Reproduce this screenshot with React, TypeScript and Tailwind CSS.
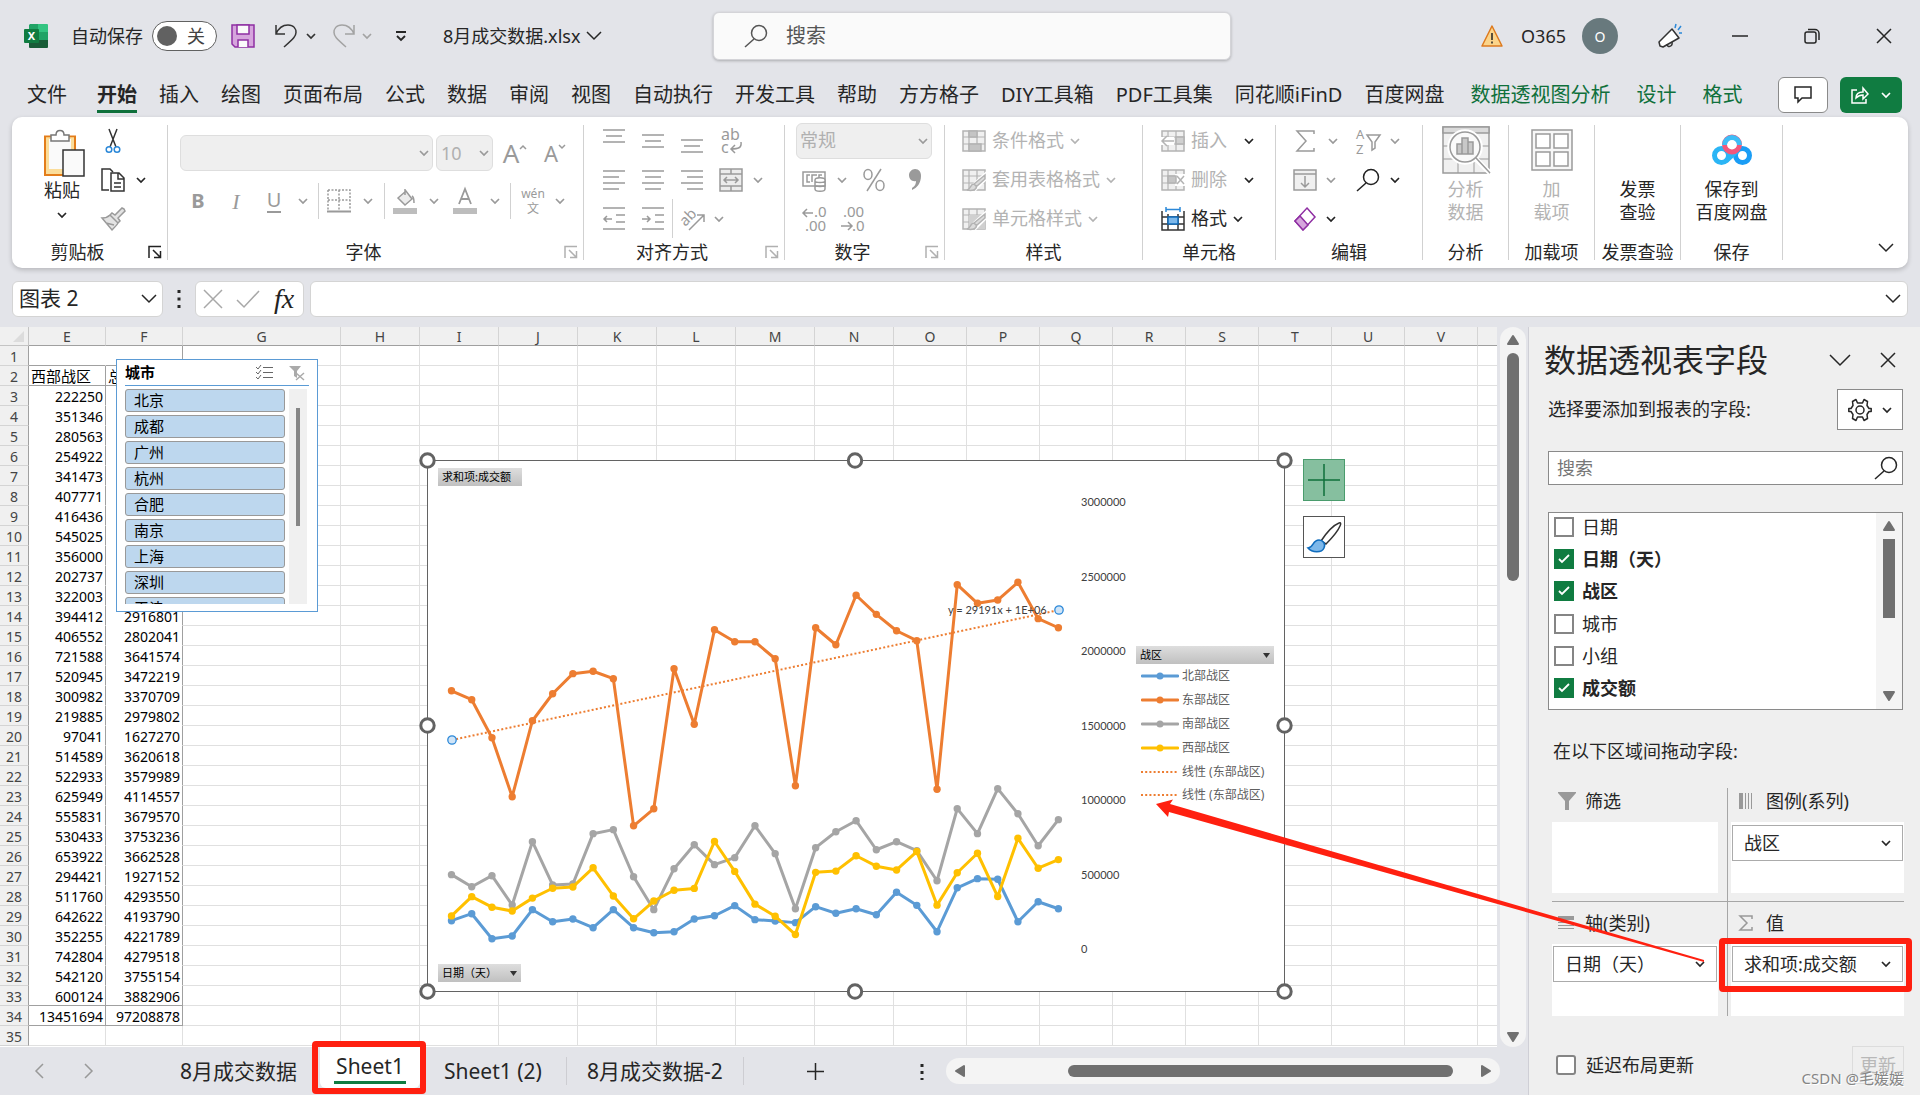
import type { ReactNode } from "react";

const columns = "EFGHIJKLMNOPQRSTUV".split("");

const west = [
  222250, 351346, 280563, 254922, 341473, 407771, 416436, 545025, 356000, 202737, 322003, 394412,
  406552, 721588, 520945, 300982, 219885, 97041, 514589, 522933, 625949, 555831, 530433, 653922,
  294421, 511760, 642622, 352255, 742804, 542120, 600124,
];

// the first totals are hidden behind the slicer
const totals = [
  2916801, 2802041, 3641574, 3472219, 3370709, 2979802, 1627270, 3620618, 3579989, 4114557, 3679570,
  3753236, 3662528, 1927152, 4293550, 4193790, 4221789, 4279518, 3755154, 3882906, 97208878,
];

// values in thousands
const north = [
  190, 237, 69, 87, 264, 183, 201, 143, 264, 143, 109, 116, 201, 223, 291, 197, 188, 177, 284, 240,
  270, 230, 381, 293, 116, 411, 472, 468, 183, 317, 270,
];
const east = [
  1733, 1673, 1418, 1022, 1532, 1713, 1848, 1864, 1814, 827, 941, 1881, 1508, 2143, 2062, 2062, 1948,
  1096, 2156, 2042, 2374, 2246, 2136, 2069, 1072, 2445, 2320, 2342, 2461, 2217, 2156,
];
const south = [
  499, 418, 492, 295, 720, 430, 436, 774, 801, 485, 264, 539, 700, 566, 613, 827, 640, 270, 680, 787,
  861, 666, 720, 660, 458, 942, 774, 1076, 908, 693, 868,
];

const series = [
  { name: "北部战区", color: "#5b9bd5", data: north },
  { name: "东部战区", color: "#ed7d31", data: east },
  { name: "南部战区", color: "#a5a5a5", data: south },
  { name: "西部战区", color: "#ffc000", data: west.map((v) => v / 1000) },
];

const Icon = ({
  w = 24,
  h = 24,
  className = "",
  children,
}: {
  w?: number;
  h?: number;
  className?: string;
  children: ReactNode;
}) => (
  <svg
    width={w}
    height={h}
    viewBox={`0 0 ${w} ${h}`}
    fill="none"
    stroke="currentColor"
    strokeWidth={1.5}
    className={`shrink-0 overflow-visible ${className}`}
    aria-hidden="true"
  >
    {children}
  </svg>
);

const Chevron = ({ className = "" }: { className?: string }) => (
  <Icon w={10} h={8} className={className}>
    <path d="M1 2l4 4 4-4" strokeWidth={1.7} />
  </Icon>
);

const BigChevron = ({ className = "" }: { className?: string }) => (
  <Icon w={16} h={12} className={className}>
    <path d="M1 2l7 7 7-7" />
  </Icon>
);

const SearchIcon = ({ className = "" }: { className?: string }) => (
  <Icon w={24} h={24} className={className}>
    <circle cx="15" cy="9" r="7.5" />
    <path d="M10 15L1 23" />
  </Icon>
);

const Tool = ({ label, className = "", children }: { label: string; className?: string; children: ReactNode }) => (
  <button aria-label={label} className={`flex h-full shrink-0 items-center justify-center ${className}`}>
    {children}
  </button>
);

const Drop = ({ className = "w-5" }: { className?: string }) => (
  <button aria-label="更多" className={`flex h-full shrink-0 items-center justify-center ${className}`}>
    <Chevron />
  </button>
);

const Divider = () => <div className="my-2 w-px shrink-0 bg-[#d1d1d1]" />;

const SmallDivider = () => (
  <div className="flex h-full w-2 shrink-0 justify-center">
    <div className="w-px bg-[#d1d1d1]" />
  </div>
);

const Launcher = ({ className }: { className: string }) => (
  <button aria-label="对话框启动器" className={`flex h-7 w-6 items-center justify-center ${className}`}>
    <Icon w={14} h={14}>
      <path d="M1 13V1.500H13M5 5l7 7M12.500 6v6.500H6" />
    </Icon>
  </button>
);

const Group = ({
  label,
  width,
  launcher,
  children,
}: {
  label: string;
  width: string;
  launcher?: string;
  children: ReactNode;
}) => (
  <>
    <section className={`flex shrink-0 flex-col pt-1 ${width}`}>
      <div className="h-[117px]">{children}</div>
      <div className="flex h-7 items-center">
        <span className="flex-1 whitespace-nowrap text-center text-[18px]">{label}</span>
        {launcher && <Launcher className={launcher} />}
      </div>
    </section>
    <Divider />
  </>
);

const BigTool = ({ lines, className = "", children }: { lines: string[]; className?: string; children?: ReactNode }) => (
  <button className={`flex w-full flex-col items-center text-[18px]/[23px] ${className}`}>
    <span className="flex h-[57px] items-center">{children}</span>
    {lines.map((l) => (
      <span key={l}>{l}</span>
    ))}
  </button>
);

const Lines = ({ rows, children }: { rows: number[][]; children?: ReactNode }) => (
  <Icon>
    {rows.map(([a, b, y]) => (
      <path key={y} d={`M${a} ${y}H${b}`} />
    ))}
    {children}
  </Icon>
);

const TableIcon = ({ children }: { children?: ReactNode }) => (
  <Icon>
    <path d="M1 2h22v20H1z" fill="#f0f0f0" />
    <path d="M1 8h22M1 15h22M7 2v20M15 2v20" strokeWidth={1.2} />
    {children}
  </Icon>
);

const brushStroke = (
  <>
    <path d="M23 7L12 17l2 3 9-9z" fill="#e0e0e0" stroke="#fff" strokeWidth={4} />
    <path d="M23 7L12 16l2.500 2.500L23 11zM12 16c-4 0-3 5-7 6 5 1 9.500 0 9.500-3.500z" fill="#dcdcdc" />
  </>
);

const TitleBar = () => (
  <header className="flex h-[72px] items-center">
    <div className="flex w-[713px] shrink-0 items-center pl-6 text-[18px]">
      <svg width="24" height="24" viewBox="0 0 24 24" className="shrink-0">
        <path d="M6 0h9v8H5V1z" fill="#21a366" />
        <path d="M14 0h9a1 1 0 0 1 1 1v7H14z" fill="#33c481" />
        <path d="M5 8h10v8H5z" fill="#107c41" />
        <path d="M14 8h10v8H14z" fill="#21a366" />
        <path d="M5 16h19v7a1 1 0 0 1-1 1H6a1 1 0 0 1-1-1z" fill="#185c37" />
        <rect y="5" width="15" height="14" rx="1" fill="#107c41" />
        <text x="7.500" y="16" textAnchor="middle" fontSize="11" fontWeight="700" fill="#fff">X</text>
      </svg>
      <label htmlFor="autosave" className="ml-[23px] whitespace-nowrap">自动保存</label>
      <span className="relative ml-[9px] flex h-[30px] w-[65px] shrink-0 items-center rounded-full border border-[#616161] bg-white pl-1">
        <input id="autosave" type="checkbox" role="switch" className="absolute inset-0 appearance-none" />
        <span className="size-5 rounded-full bg-[#616161]" />
        <span className="ml-2.5 text-[#424242]">关</span>
      </span>
      <button aria-label="保存" className="ml-3.5">
        <Icon>
          <path d="M1 1h22v22H4l-3-3z" fill="#d6a5dd" stroke="#8f2fa3" />
          <path d="M6 1h12v9H6zM7 23v-7h10v7" fill="#fafafa" stroke="#8f2fa3" />
        </Icon>
      </button>
      <button aria-label="撤消" className="ml-5 text-[#333]">
        <Icon w={22}>
          <path d="M1 1v9h9M1 10C4 3 9 1 13 1c6 0 8 4 8 7.500S19 14 9 23" />
        </Icon>
      </button>
      <Drop className="ml-1 w-5 text-[#333]" />
      <button aria-label="恢复" className="ml-3 text-[#a3a3a3]">
        <Icon w={22}>
          <path d="M21 1v9h-9M21 10C18 3 13 1 9 1 3 1 1 5 1 8.500S3 14 13 23" />
        </Icon>
      </button>
      <Drop className="ml-1 w-4 text-[#a3a3a3]" />
      <button aria-label="自定义快速访问工具栏" className="ml-5">
        <Icon w={12} h={12}>
          <path d="M1 2h10M2 6l4 4 4-4" strokeWidth={1.800} />
        </Icon>
      </button>
      <button className="ml-9 flex items-center gap-1.5 whitespace-nowrap">
        8月成交数据.xlsx
        <BigChevron />
      </button>
    </div>
    <div className="flex h-12 max-w-[518px] flex-1 items-center rounded-md border border-[#d4d4d8] bg-[#fafafa] pl-[30px] shadow-[0_1px_3px_rgba(0,0,0,0.25)]">
      <SearchIcon className="text-[#555]" />
      <input
        aria-label="搜索"
        placeholder="搜索"
        className="ml-[18px] min-w-0 flex-1 bg-transparent text-[20px] outline-none placeholder:text-[#555]"
      />
    </div>
    <div className="ml-auto flex shrink-0 items-center pr-7 text-[18px]">
      <Icon w={22} h={22}>
        <path d="M11 1L1 21h20z" fill="#fbd48a" stroke="#dd7a1f" strokeLinejoin="round" />
        <path d="M11 8v7M11 16.500v2" stroke="#222" />
      </Icon>
      <span className="ml-[18px]">O365</span>
      <button aria-label="帐户" className="ml-4 size-9 rounded-full bg-[#68797d] text-[14px] text-white">O</button>
      <button aria-label="即将推出" className="ml-10">
        <Icon className="text-[#333]">
          <path d="M14 5L1 18l1 4 3 1 16-9z" fill="#fff" strokeLinejoin="round" />
          <path d="M9 20c0 4 6 3 5-2" />
          <path d="M17 4l1-4M20 6l3-4M21 9h3" stroke="#2b88d8" />
        </Icon>
      </button>
      <button aria-label="最小化" className="ml-[50px]">
        <Icon w={16} h={16}><path d="M0 8h16" /></Icon>
      </button>
      <button aria-label="还原" className="ml-14">
        <Icon w={16} h={16}>
          <rect x="1" y="4" width="11" height="11" rx="2" />
          <path d="M4 1.500h7a4 4 0 0 1 4 4V12" />
        </Icon>
      </button>
      <button aria-label="关闭" className="ml-14">
        <Icon w={16} h={16}><path d="M1 1l14 14M15 1L1 15" /></Icon>
      </button>
    </div>
  </header>
);

const tabs = [
  "插入", "绘图", "页面布局", "公式", "数据", "审阅", "视图", "自动执行", "开发工具", "帮助",
  "方方格子", "DIY工具箱", "PDF工具集", "同花顺iFinD", "百度网盘",
];

const RibbonTabs = () => (
  <nav className="flex h-[45px] items-center gap-[22px] whitespace-nowrap pl-[27px] pr-[18px] text-[20px]/[30px]">
    <button>文件</button>
    <button className="ml-2 border-b-3 border-[#0f703b] pt-[3px] font-bold">开始</button>
    {tabs.map((t) => (
      <button key={t}>{t}</button>
    ))}
    <button className="ml-1 text-[#0f703b]">数据透视图分析</button>
    <button className="ml-1 text-[#0f703b]">设计</button>
    <button className="ml-1 text-[#0f703b]">格式</button>
    <div className="ml-auto flex gap-3">
      <button aria-label="批注" className="flex h-9 w-[50px] items-center justify-center rounded-md border border-[#8a8a8a] bg-white">
        <Icon w={18} h={18}><path d="M1 1h16v11H8l-4 4v-4H1z" /></Icon>
      </button>
      <button aria-label="共享" className="flex h-9 w-[62px] items-center justify-center gap-3 rounded-md bg-[#107c41] text-white">
        <Icon w={18} h={18}>
          <path d="M6 4H1v13h14v-4M5 12c0-4 3-6 7-6V2l5 6-5 5V9c-4 0-5 1-7 3z" />
        </Icon>
        <Chevron />
      </button>
    </div>
  </nav>
);

const Clipboard = () => (
  <Group label="剪贴板" width="w-[155px]" launcher="text-[#222]">
    <div className="flex h-full pl-3">
      <button className="flex w-[76px] flex-col items-center pt-2 text-[18px]/[26px]">
        <Icon w={42} h={48} className="ml-1">
          <path d="M2 8h30v42H2z" transform="scale(1 .92)" fill="#fbdd9a" stroke="#e37d1a" strokeWidth={2} />
          <path d="M6 10h22v30H6z" fill="#fafafa" stroke="none" />
          <path d="M8 12V6h5c0-6 8-6 8 0h5v6z" fill="#fff" stroke="#777" />
          <path d="M20 21h21v26H20z" fill="#fafafa" stroke="#333" />
        </Icon>
        粘贴
        <Chevron className="mt-2" />
      </button>
      <div className="flex flex-col">
        <div className="flex h-[39px]">
          <Tool label="剪切" className="w-[26px]">
            <Icon w={16}>
              <path d="M4 0l7 18M12 0L5 18" stroke="#333" />
              <circle cx="4" cy="20.500" r="2.800" stroke="#2b88d8" />
              <circle cx="12" cy="20.500" r="2.800" stroke="#2b88d8" />
            </Icon>
          </Tool>
        </div>
        <div className="flex h-[39px]">
          <Tool label="复制" className="w-[26px]">
            <Icon className="text-[#333]">
              <path d="M8 22H1V1h8l3 3" />
              <path d="M10 5h8l5 5v13H10zM17 5v6h6M13 15h7M13 19h7" fill="#fff" />
            </Icon>
          </Tool>
          <Drop className="w-[30px]" />
        </div>
        <div className="flex h-[39px] text-[#9a9a9a]">
          <Tool label="格式刷" className="w-[26px]">
            <Icon>
              <path d="M23 2l-2-1-7 7-3-2-2 2 8 8 2-2-2-3 7-7zM9 8c-2 2-5 3-8 3l10 12c3-3 5-5 6-7M5 16l8 2" fill="#e3e3e3" />
            </Icon>
          </Tool>
        </div>
      </div>
    </div>
  </Group>
);

const FontGroup = () => (
  <Group label="字体" width="w-[415px]" launcher="text-[#b0b0b0]">
    <div className="flex flex-col gap-3 pl-3 pt-3.5 text-[#9a9a9a]">
      <div className="flex h-9 gap-[3px]">
        <div className="relative w-[253px]">
          <select aria-label="字体" disabled className="size-full appearance-none rounded-md border border-[#dedede] bg-[#efefef]" />
          <Chevron className="absolute right-1 top-3.5" />
        </div>
        <div className="relative w-[57px]">
          <select aria-label="字号" disabled className="size-full appearance-none rounded-md border border-[#dedede] bg-[#efefef] pl-1 text-[18px] text-[#b0b0b0]">
            <option>10</option>
          </select>
          <Chevron className="absolute right-1 top-3.5" />
        </div>
        <Tool label="增大字号" className="w-[38px] text-[26px]">
          <span>A</span>
          <Icon w={8} h={20}><path d="M1 6l3-3 3 3" /></Icon>
        </Tool>
        <Tool label="减小字号" className="w-9 text-[22px]">
          <span>A</span>
          <Icon w={8} h={20}><path d="M1 2l3 3 3-3" /></Icon>
        </Tool>
      </div>
      <div className="flex h-9">
        <Tool label="加粗" className="w-9 text-[20px] font-bold">B</Tool>
        <Tool label="倾斜" className="w-10 font-['Liberation_Serif'] text-[22px] italic">I</Tool>
        <Tool label="下划线" className="w-9 text-[20px]"><span className="border-b-2 leading-[22px]">U</span></Tool>
        <Drop className="w-[22px]" />
        <SmallDivider />
        <Tool label="边框" className="w-[34px]">
          <Icon>
            <path d="M1 1h22v20M1 1v20M12 1v20M1 11h22" strokeDasharray="2 1.500" />
            <path d="M0 22.500h24" strokeWidth={2} />
          </Icon>
        </Tool>
        <Drop className="w-6" />
        <SmallDivider />
        <Tool label="填充颜色" className="w-[34px]">
          <Icon>
            <path d="M12 0v6M5 9l8-7 6 8-7 6zM19 7c2 1 2 4 2 7" fill="#ececec" />
            <path d="M0 19h24v6H0z" fill="#bdbdbd" stroke="none" />
          </Icon>
        </Tool>
        <Drop className="w-6" />
        <Tool label="字体颜色" className="w-[38px]">
          <Icon>
            <path d="M6 15l6-15 6 15M8 10h8" strokeWidth={1.800} />
            <path d="M0 19h24v6H0z" fill="#bdbdbd" stroke="none" />
          </Icon>
        </Tool>
        <Drop className="w-[22px]" />
        <SmallDivider />
        <Tool label="拼音" className="w-[38px] flex-col text-[12px]/[15px]">
          <span>wén</span>
          <span>文</span>
        </Tool>
        <Drop className="w-4" />
      </div>
    </div>
  </Group>
);

const AlignGroup = () => (
  <Group label="对齐方式" width="w-[200px]" launcher="text-[#b0b0b0]">
    <div className="flex flex-col pl-2.5 text-[#9a9a9a]">
      <div className="flex h-[39px]">
        <Tool label="顶端对齐" className="w-[39px]"><Lines rows={[[1, 23, 1], [4, 20, 7], [1, 23, 13]]} /></Tool>
        <Tool label="垂直居中" className="w-[39px]"><Lines rows={[[1, 23, 6], [4, 20, 12], [1, 23, 18]]} /></Tool>
        <Tool label="底端对齐" className="w-[39px]"><Lines rows={[[1, 23, 11], [4, 20, 17], [1, 23, 23]]} /></Tool>
        <Tool label="自动换行" className="w-[39px]">
          <Icon>
            <text x="2" y="11" fontSize="16" fill="currentColor" stroke="none">ab</text>
            <text x="2" y="24" fontSize="16" fill="currentColor" stroke="none">c</text>
            <path d="M22 13c1 6-3 7-10 7M16 16l-4 4 4 4" />
          </Icon>
        </Tool>
      </div>
      <div className="flex h-[39px]">
        <Tool label="左对齐" className="w-[39px]"><Lines rows={[[1, 23, 3], [1, 17, 9], [1, 23, 15], [1, 17, 21]]} /></Tool>
        <Tool label="居中" className="w-[39px]"><Lines rows={[[1, 23, 3], [4, 20, 9], [1, 23, 15], [4, 20, 21]]} /></Tool>
        <Tool label="右对齐" className="w-[39px]"><Lines rows={[[1, 23, 3], [7, 23, 9], [1, 23, 15], [7, 23, 21]]} /></Tool>
        <Tool label="合并后居中" className="w-[39px]">
          <Icon>
            <path d="M1 1h22v22H1zM1 6h22M1 18h22M12 1v5M12 18v5" fill="#ececec" />
            <path d="M5 12h14M8 9l-3 3 3 3M16 9l3 3-3 3" />
          </Icon>
        </Tool>
        <Drop className="w-4" />
      </div>
      <div className="flex h-[39px]">
        <Tool label="减少缩进量" className="w-[39px]">
          <Lines rows={[[1, 23, 1], [14, 23, 8], [14, 23, 15], [1, 23, 22]]}><path d="M10 12H2M5 9l-3 3 3 3" /></Lines>
        </Tool>
        <Tool label="增加缩进量" className="w-[39px]">
          <Lines rows={[[1, 23, 1], [14, 23, 8], [14, 23, 15], [1, 23, 22]]}><path d="M1 12h8M6 9l3 3-3 3" /></Lines>
        </Tool>
        <div className="w-px bg-[#d1d1d1]" />
        <Tool label="方向" className="w-10">
          <Icon>
            <text x="0" y="16" fontSize="15" fill="currentColor" stroke="none" transform="rotate(-45 7 13)">ab</text>
            <path d="M8 23L23 8M16 8h7v7" />
          </Icon>
        </Tool>
        <Drop className="w-3" />
      </div>
    </div>
  </Group>
);

const NumberGroup = () => (
  <Group label="数字" width="w-[159px]" launcher="text-[#b0b0b0]">
    <div className="flex flex-col pl-[11px] text-[#9a9a9a]">
      <div className="flex h-[39px] items-center">
        <div className="relative h-9 w-[136px]">
          <select aria-label="数字格式" disabled className="size-full appearance-none rounded-md border border-[#dedede] bg-[#efefef] pl-[3px] text-[18px] text-[#b0b0b0]">
            <option>常规</option>
          </select>
          <Chevron className="absolute right-1 top-3.5" />
        </div>
      </div>
      <div className="flex h-[39px]">
        <Tool label="会计数字格式" className="w-9">
          <Icon>
            <path d="M1 4h22v14H1z" />
            <path d="M8 7H5v7h3M15 7h-5v7M20 7h-3v3" />
            <path d="M13 12c0-3 10-3 10 0v9c0 3-10 3-10 0zM13 13c0 2 10 2 10 0M13 17c0 2 10 2 10 0" fill="#fff" />
          </Icon>
        </Tool>
        <Drop />
        <Tool label="百分比样式" className="w-11">
          <Icon>
            <ellipse cx="6" cy="6.500" rx="4" ry="5" />
            <ellipse cx="18" cy="17.500" rx="4" ry="5" />
            <path d="M19 1L5 23" />
          </Icon>
        </Tool>
        <Tool label="千位分隔样式" className="w-[38px]">
          <Icon w={14} h={24}>
            <path d="M7 1c4 0 6 3 6 7 0 7-4 12-9 14v-2c3-2 4-4 4-7-4 1-7-2-7-6 0-3 3-6 6-6z" fill="currentColor" stroke="none" />
          </Icon>
        </Tool>
      </div>
      <div className="flex h-[39px]">
        <Tool label="增加小数位数" className="w-[38px]">
          <Icon w={26} h={28}>
            <text x="12" y="12" fontSize="15" fill="currentColor" stroke="none">.0</text>
            <text x="3" y="26" fontSize="15" fill="currentColor" stroke="none">.00</text>
            <path d="M11 8H1M5 4L1 8l4 4" />
          </Icon>
        </Tool>
        <Tool label="减少小数位数" className="w-[38px]">
          <Icon w={26} h={28}>
            <text x="3" y="12" fontSize="15" fill="currentColor" stroke="none">.00</text>
            <text x="12" y="26" fontSize="15" fill="currentColor" stroke="none">.0</text>
            <path d="M1 21h11M8 17l4 4-4 4" />
          </Icon>
        </Tool>
      </div>
    </div>
  </Group>
);

const StyleGroup = () => (
  <Group label="样式" width="w-[197px]">
    <div className="flex flex-col pl-[17px] text-[18px] text-[#b3b3b3]">
      <button className="flex h-[39px] items-center gap-1.5">
        <TableIcon><path d="M7 2h8v6H7zM7 15h12v7H7z" fill="#c4c4c4" /></TableIcon>
        条件格式<Chevron />
      </button>
      <button className="flex h-[39px] items-center gap-1.5">
        <TableIcon>{brushStroke}</TableIcon>
        套用表格格式<Chevron />
      </button>
      <button className="flex h-[39px] items-center gap-1.5">
        <TableIcon>
          <path d="M7 8h16v14H7z" fill="#d0d0d0" stroke="none" />
          {brushStroke}
        </TableIcon>
        单元格样式<Chevron />
      </button>
    </div>
  </Group>
);

const CellGroup = () => (
  <Group label="单元格" width="w-[132px]">
    <div className="flex flex-col pl-[18px] text-[18px]">
      <div className="flex h-[39px] items-center text-[#b3b3b3]">
        <button className="flex items-center gap-1.5">
          <TableIcon>
            <path d="M0 8h13v8H0z" fill="#fff" stroke="none" />
            <path d="M15 8h8v7h-8z" fill="#d0d0d0" />
            <path d="M13 12H1M6 7l-5 5 5 5" />
          </TableIcon>
          插入
        </button>
        <Drop className="ml-3 w-5 text-[#222]" />
      </div>
      <div className="flex h-[39px] items-center text-[#b3b3b3]">
        <button className="flex items-center gap-1.5">
          <TableIcon>
            <path d="M14 6h10v12H14z" fill="#fff" stroke="none" />
            <path d="M7 8h8v7H7z" fill="#c4c4c4" />
            <path d="M16 8l7 8M23 8l-7 8" />
          </TableIcon>
          删除
        </button>
        <Drop className="ml-3 w-5 text-[#222]" />
      </div>
      <button className="flex h-[39px] items-center gap-1.5">
        <Icon>
          <path d="M1 4v19h22V4M1 10h22M1 17h22M7 7v16M17 7v16" stroke="#333" />
          <path d="M7 10h10v7H7z" fill="#7db8ea" stroke="#0f6cbd" />
          <path d="M5 0v5M19 0v5M5 2.500h14" stroke="#2b88d8" />
        </Icon>
        格式<Chevron />
      </button>
    </div>
  </Group>
);

const EditGroup = () => (
  <Group label="编辑" width="w-[146px]">
    <div className="flex flex-col pl-[11px] text-[#9a9a9a]">
      <div className="flex h-[39px]">
        <Tool label="自动求和" className="w-9">
          <Icon w={20}><path d="M19 5V2H2l9 10L2 22h17v-3" /></Icon>
        </Tool>
        <Drop />
        <Tool label="排序和筛选" className="ml-1 w-[42px]">
          <Icon w={26}>
            <text x="1" y="10" fontSize="13" fill="currentColor" stroke="none">A</text>
            <text x="1" y="25" fontSize="13" fill="currentColor" stroke="none">Z</text>
            <path d="M12 6h13l-5 7v6l-3 2v-8z" />
          </Icon>
        </Tool>
        <Drop className="w-3" />
      </div>
      <div className="flex h-[39px]">
        <Tool label="填充" className="w-9">
          <Icon>
            <path d="M1 2h22v20H1zM1 6h22" fill="#f0f0f0" />
            <path d="M12 8v11M8 15l4 4 4-4" />
          </Icon>
        </Tool>
        <Drop className="w-4" />
        <Tool label="查找和选择" className="ml-2 w-[42px] text-[#222]"><SearchIcon /></Tool>
        <Drop className="w-3 text-[#222]" />
      </div>
      <div className="flex h-[39px]">
        <Tool label="清除" className="w-9">
          <Icon>
            <path d="M14 1l8 9-12 13-8-9z" fill="#fff" stroke="#8f2fa3" />
            <path d="M7 9l8 9-5 5-8-9z" fill="#d6a5dd" stroke="#8f2fa3" />
          </Icon>
        </Tool>
        <Drop className="w-4 text-[#222]" />
      </div>
    </div>
  </Group>
);

const Ribbon = () => (
  <div className="mx-3 flex h-[151px] overflow-hidden rounded-[10px] bg-white shadow-[0_2px_5px_rgba(0,0,0,0.2)]">
    <Clipboard />
    <FontGroup />
    <AlignGroup />
    <NumberGroup />
    <StyleGroup />
    <CellGroup />
    <EditGroup />
    <Group label="分析" width="w-[85px]">
      <BigTool lines={["分析", "数据"]} className="text-[#b3b3b3]">
        <Icon w={48} h={48} className="text-[#9a9a9a]">
          <path d="M1 1h46v46H1z" fill="#f0f0f0" />
          <path d="M1 1h46v6H1z" fill="#dadada" />
          <path d="M1 20h46M1 33h46M16 7v40M32 33v14" strokeWidth={1} />
          <circle cx="23" cy="21" r="17" fill="#fff" stroke="#fff" />
          <circle cx="23" cy="21" r="15" fill="#fafafa" />
          <path d="M34 33l14 14" stroke="#fff" strokeWidth={5} />
          <path d="M34 32l14 15" />
          <path d="M15 18h5v10h-5zM20 12h6v16h-6zM26 16h5v12h-5z" fill="#c8c8c8" />
        </Icon>
      </BigTool>
    </Group>
    <Group label="加载项" width="w-[85px]">
      <BigTool lines={["加", "载项"]} className="text-[#b3b3b3]">
        <Icon w={42} h={42} className="text-[#9a9a9a]">
          <path d="M1 1h40v40H1z" fill="#f7f7f7" />
          <path d="M5 5h14v14H5zM23 5h14v14H23zM5 23h14v14H5zM23 23h14v14H23z" fill="#fff" />
        </Icon>
      </BigTool>
    </Group>
    <Group label="发票查验" width="w-[85px]">
      <BigTool lines={["发票", "查验"]} />
    </Group>
    <Group label="保存" width="w-[101px]">
      <BigTool lines={["保存到", "百度网盘"]}>
        <Icon w={40} h={32}>
          <circle cx="9.500" cy="21.500" r="7" stroke="#2bb5f5" strokeWidth={5} />
          <circle cx="30.500" cy="21.500" r="7" stroke="#1a9df5" strokeWidth={5} />
          <path d="M14 27l12-11" stroke="#2bb5f5" strokeWidth={5} />
          <circle cx="20" cy="10.500" r="7.500" stroke="#f2577c" strokeWidth={5} />
          <path d="M12.500 11a7.500 7.500 0 0 1 15 0" stroke="#3dbdf7" strokeWidth={5} />
        </Icon>
      </BigTool>
    </Group>
    <button aria-label="折叠功能区" className="ml-auto mr-3.5 self-end pb-3.5">
      <BigChevron />
    </button>
  </div>
);

const FormulaBar = () => (
  <div className="mx-3 flex h-[59px] items-center pb-0.5 pt-1">
    <div className="relative h-9 w-[151px] shrink-0">
      <select aria-label="名称框" className="size-full appearance-none rounded-md border border-[#d4d4d4] bg-white pl-1.5 text-[21px]">
        <option>图表 2</option>
      </select>
      <BigChevron className="absolute right-1.5 top-3" />
    </div>
    <Icon w={4} h={20} className="mx-[14px]">
      <path d="M2 1v18" strokeWidth={3} strokeDasharray="3 4.500" />
    </Icon>
    <div className="flex h-9 w-[109px] shrink-0 items-center justify-between rounded-md border border-[#d4d4d4] bg-white px-2">
      <button aria-label="取消">
        <Icon w={18} h={20} className="text-[#a8a8a8]"><path d="M0 1l18 18M18 1L0 19" /></Icon>
      </button>
      <button aria-label="输入">
        <Icon w={24} h={20} className="text-[#a8a8a8]"><path d="M1 11l7 7L23 2" /></Icon>
      </button>
      <button aria-label="插入函数" className="w-[22px] font-['Liberation_Serif'] text-[28px]/[28px] italic text-[#222]">fx</button>
    </div>
    <div className="ml-1.5 flex h-9 min-w-0 flex-1 items-center rounded-md border border-[#d4d4d4] bg-white pr-1.5">
      <input aria-label="编辑栏" className="h-full min-w-0 flex-1 bg-transparent px-2 text-[18px] outline-none" />
      <BigChevron />
    </div>
  </div>
);

const Grid = () => (
  <table className="w-full table-fixed border-separate border-spacing-0 bg-white text-[14px]/[17px] text-black">
    <colgroup>
      <col className="w-[29px]" />
      <col className="w-[77px]" />
      <col className="w-[77px]" />
      <col className="w-[158px]" />
      {columns.slice(3, 10).map((c) => (
        <col key={c} className="w-[79px]" />
      ))}
      {columns.slice(10).map((c) => (
        <col key={c} className="w-[73px]" />
      ))}
      <col />
    </colgroup>
    <thead>
      <tr className="bg-[#f0f0f0] text-[#444]">
        <th className="h-[19px] border-b border-r border-[#c4c4c4] p-0">
          <Icon w={11} h={11} className="ml-auto mr-1"><path d="M11 0v11H0z" fill="#dcdcdc" stroke="none" /></Icon>
        </th>
        {columns.map((c) => (
          <th key={c} scope="col" className="h-[19px] border-b border-r border-b-[#a0a0a0] border-r-[#d4d4d4] p-0 pt-px font-normal">
            {c}
          </th>
        ))}
        <th className="border-b border-[#a0a0a0] p-0" />
      </tr>
    </thead>
    <tbody>
      {Array.from({ length: 35 }, (_, i) => i + 1).map((n) => {
        const inTable = n <= 34;
        const ruled = [1, 2, 33, 34].includes(n);
        const bottom = ruled ? "border-b-[#a0a0a0]" : inTable ? "border-b-white" : "border-b-[#e0e0e0]";
        const align = n === 2 ? "pl-0.5 text-left text-[15px]/[17px]" : "pr-0.5 text-right";
        const e = n === 2 ? "西部战区" : n === 34 ? 13451694 : west[n - 3];
        const f = n === 2 ? "总计" : n >= 14 ? totals[n - 14] : "";
        return (
          <tr key={n}>
            <th scope="row" className="h-5 border-b border-r border-b-[#d4d4d4] border-r-[#a0a0a0] bg-[#f0f0f0] p-0 pt-0.5 text-center font-normal text-[#444]">
              {n}
            </th>
            <td className={`h-5 overflow-hidden whitespace-nowrap border-b border-r p-0 pt-0.5 ${bottom} ${n === 1 ? "border-r-white" : inTable ? "border-r-[#a0a0a0]" : "border-r-[#e0e0e0]"} ${align}`}>
              {e}
            </td>
            <td className={`h-5 overflow-hidden whitespace-nowrap border-b border-r p-0 pt-0.5 ${bottom} ${inTable ? "border-r-[#a0a0a0]" : "border-r-[#e0e0e0]"} ${align}`}>
              {f}
            </td>
            {columns.slice(2).map((c) => (
              <td key={c} className="h-5 border-b border-r border-[#e0e0e0] p-0" />
            ))}
            <td className="h-5 border-b border-[#e0e0e0] p-0" />
          </tr>
        );
      })}
    </tbody>
  </table>
);

const cities = ["北京", "成都", "广州", "杭州", "合肥", "南京", "上海", "深圳", "天津"];

const Slicer = () => (
  <div className="absolute left-[116px] top-8 flex h-[253px] w-[202px] flex-col border border-[#5b9bd5] bg-white px-2 pb-[7px] text-[15px] text-black">
    <div className="flex h-[26px] shrink-0 items-center border-b border-[#5b9bd5] pr-1">
      <span className="flex-1 font-bold">城市</span>
      <button aria-label="多选" className="mr-4 text-[#666]">
        <Icon w={17} h={15}>
          <path d="M7 2.500h10M7 7.500h10M7 12.500h10M0 2l2 2 3-4M0 7l2 2 3-4M0 12l2 2 3-4" strokeWidth={1} />
        </Icon>
      </button>
      <button aria-label="清除筛选器" className="text-[#aaa]">
        <Icon w={16} h={16}>
          <path d="M0 1h12L8 6v7l-3-2V6z" fill="currentColor" stroke="none" />
          <path d="M7 8l8 7M15 8l-8 7" />
        </Icon>
      </button>
    </div>
    <div className="mt-[3px] flex min-h-0 flex-1 justify-between">
      <div className="flex w-40 flex-col gap-[3px] overflow-hidden">
        {cities.map((c) => (
          <button key={c} className="flex h-[23px] shrink-0 rounded-[3px] border border-[#999] bg-[#bdd7ee] pl-2 leading-5">
            {c}
          </button>
        ))}
      </div>
      <div className="mr-0.5 w-[18px] bg-[#f0f0f0] pt-[19px]">
        <div className="mx-auto h-[118px] w-1 bg-[#868686]" />
      </div>
    </div>
  </div>
);

const px = (i: number) => 24.5 + i * 20.23;
const py = (v: number) => 489 - v * 0.149;

const FieldButton = ({ arrow, className, children }: { arrow?: boolean; className: string; children: ReactNode }) => (
  <button className={`absolute flex h-[18px] items-center justify-between whitespace-nowrap bg-gradient-to-b from-[#dedede] to-[#c0c0c0] pl-1 pr-1 text-[11px] text-black ${className}`}>
    {children}
    {arrow && (
      <Icon w={7} h={5}><path d="M0 0h7L3.500 5z" fill="#333" stroke="none" /></Icon>
    )}
  </button>
);

const Chart = () => (
  <div className="absolute left-[427px] top-[133px] h-[532px] w-[858px] border border-[#636363] bg-white">
    <svg width="858" height="532" viewBox="0 0 858 532" className="absolute -left-px -top-px overflow-visible" fill="none">
      {series.map((s) => (
        <g key={s.name}>
          <polyline
            points={s.data.map((v, i) => `${px(i)},${py(v)}`).join(" ")}
            stroke={s.color}
            strokeWidth={3}
            strokeLinejoin="round"
          />
          {s.data.map((v, i) => (
            <circle key={i} cx={px(i)} cy={py(v)} r={3.700} fill={s.color} />
          ))}
        </g>
      ))}
      <path d="M25 280L632 150" stroke="#ed7d31" strokeWidth={2} strokeDasharray="2 2.200" />
      {[0, 500000, 1000000, 1500000, 2000000, 2500000, 3000000].map((v) => (
        <text key={v} x="654" y={py(v / 1000) + 4} fontSize="11" className="fill-[#404040] font-['Lato']">{v}</text>
      ))}
      <text x="521" y="154" fontSize="11" className="fill-[#404040] font-['Lato']">y = 29191x + 1E+06</text>
      {[[25, 280], [632, 150]].map(([x, y]) => (
        <circle key={x} cx={x} cy={y} r="4.200" fill="#cfe4f7" stroke="#2b88d8" strokeWidth="1.300" />
      ))}
      {[0.5, 428, 857.5].map((x) =>
        [0.5, 265.5, 531.5].map((y) =>
          x === 428 && y === 265.5 ? null : (
            <circle key={`${x}-${y}`} cx={x} cy={y} r="6.700" fill="#fff" stroke="#636363" strokeWidth="3" />
          )
        )
      )}
    </svg>
    <FieldButton className="left-2.5 top-[7px] w-[84px]">求和项:成交额</FieldButton>
    <FieldButton arrow className="bottom-[9px] left-2.5 w-[83px]">日期（天）</FieldButton>
    <FieldButton arrow className="right-2.5 top-[185px] w-[138px]">战区</FieldButton>
    <ul className="absolute left-[713px] top-[203px] text-[12px] text-[#606060]">
      {series.map((s) => (
        <li key={s.name} className="flex h-6 items-center gap-[3px]">
          <svg width="38" height="8" viewBox="0 0 38 8">
            <path d="M1 4h36" stroke={s.color} strokeWidth="2.800" strokeLinecap="round" />
            <circle cx="19" cy="4" r="3.500" fill={s.color} />
          </svg>
          {s.name}
        </li>
      ))}
      {[1, 2].map((n) => (
        <li key={n} className="flex h-[23px] items-center gap-[3px] whitespace-nowrap">
          <svg width="38" height="8" viewBox="0 0 38 8">
            <path d="M0 4h36" stroke="#ed7d31" strokeWidth="1.800" strokeDasharray="2 2.200" />
          </svg>
          线性 (东部战区)
        </li>
      ))}
    </ul>
  </div>
);

const ChartButtons = () => (
  <div className="absolute left-[1303px] top-[132px] flex flex-col gap-[15px]">
    <button aria-label="图表元素" className="flex size-[42px] items-center justify-center border border-[#4a9c6d] bg-[#86bf9f] text-[#0f703b]">
      <Icon w={32} h={32}><path d="M16 0v32M0 16h32" /></Icon>
    </button>
    <button aria-label="图表样式" className="flex size-[42px] items-center justify-center border border-[#555] bg-white text-[#333]">
      <Icon w={34} h={34}>
        <path d="M14 21C20 12 27 5 32 3c2-1 2 1 1 3-2 5-8 12-14 18z" />
        <path d="M1 28c6 0 4-8 11-8 4 0 7 4 5 8-2 5-12 5-16 0z" fill="#7db8ea" stroke="#0f6cbd" />
      </Icon>
    </button>
  </div>
);

const Triangle = ({ d, w = 14, h = 11 }: { d: string; w?: number; h?: number }) => (
  <Icon w={w} h={h}>
    <path d={d} fill="#707070" stroke="#707070" strokeWidth={2} strokeLinejoin="round" />
  </Icon>
);

const up = "M7 2l5 8H2z";
const down = "M7 9l5-8H2z";

const SheetTabs = () => (
  <footer className="flex h-[48px] items-center text-[21px]/[30px]">
    <button aria-label="上一个" className="ml-[33px] text-[#999]">
      <Icon w={12} h={16}><path d="M10 1L3 8l7 7" /></Icon>
    </button>
    <button aria-label="下一个" className="ml-[38px] text-[#999]">
      <Icon w={12} h={16}><path d="M2 1l7 7-7 7" /></Icon>
    </button>
    <button className="ml-[85px] shrink-0 whitespace-nowrap">8月成交数据</button>
    <div className="relative ml-[23px] h-full w-[100px] shrink-0">
      <button className="flex h-[41px] w-full items-center justify-center rounded-b-md bg-white">
        <span className="border-b-3 border-[#107c41] px-0.5">Sheet1</span>
      </button>
      <div className="absolute -left-2 -top-1.5 h-[53px] w-[114px] rounded border-6 border-[#ff2010]" />
    </div>
    <button className="ml-6 shrink-0 whitespace-nowrap">Sheet1 (2)</button>
    <div className="ml-6 h-7 w-px bg-[#cdcdd2]" />
    <button className="ml-5 shrink-0 whitespace-nowrap">8月成交数据-2</button>
    <div className="ml-5 h-7 w-px bg-[#cdcdd2]" />
    <button aria-label="新工作表" className="ml-[63px]">
      <Icon w={17} h={17}><path d="M8.500 0v17M0 8.500h17" /></Icon>
    </button>
    <Icon w={4} h={17} className="ml-auto mr-[22px]">
      <path d="M2 1v16" strokeWidth={3} strokeDasharray="3 4" />
    </Icon>
    <div className="mr-7 flex h-[26px] w-[554px] items-center rounded-full bg-[#f4f4f4] px-2">
      <Triangle w={11} h={14} d="M2 7l8-5v10z" />
      <div className="ml-[103px] h-3 w-[385px] rounded-full bg-[#707070]" />
      <span className="ml-auto"><Triangle w={11} h={14} d="M9 7L1 2v10z" /></span>
    </div>
  </footer>
);

const fields = [
  { name: "日期", on: false },
  { name: "日期（天）", on: true },
  { name: "战区", on: true },
  { name: "城市", on: false },
  { name: "小组", on: false },
  { name: "成交额", on: true },
];

const AreaSelect = ({ label, value }: { label: string; value: string }) => (
  <div className="relative mx-px h-9">
    <select aria-label={label} className="size-full appearance-none border border-[#ababab] bg-white pl-[11px] text-[18px]">
      <option>{value}</option>
    </select>
    <Chevron className="absolute right-3 top-3.5" />
  </div>
);

const AreaTitle = ({ icon, className, children }: { icon: ReactNode; className: string; children: ReactNode }) => (
  <div className={`flex h-[42px] items-center text-[#999] ${className}`}>
    <span className="w-[27px]">{icon}</span>
    <span className="text-[#262626]">{children}</span>
  </div>
);

const FieldPane = () => (
  <aside className="flex w-[392px] shrink-0 flex-col border-l border-[#cfcfd6] bg-[#efefef] pl-[19px] pr-[17px] text-[18px]">
    <div className="-ml-1 flex h-[66px] items-center">
      <h2 className="flex-1 whitespace-nowrap text-[32px]">数据透视表字段</h2>
      <button aria-label="任务窗格选项" className="mr-[30px]">
        <Icon w={20} h={14}><path d="M0 2l10 10L20 2" /></Icon>
      </button>
      <button aria-label="关闭窗格" className="mr-[7px]">
        <Icon w={16} h={16}><path d="M1 1l14 14M15 1L1 15" /></Icon>
      </button>
    </div>
    <div className="-mt-1 flex h-[41px] items-center justify-between">
      <span>选择要添加到报表的字段:</span>
      <button aria-label="工具" className="flex h-[41px] w-[66px] items-center justify-center gap-2.5 border border-[#8a8a8a] bg-white">
        <Icon w={24} h={24}>
          <path d="M9.500 5L8 1.500 4.500 3.500 5 7.500 3 10.500H0.800v3H3l2 3-.5 4 3.500 2L9.500 19h5l1.500 3.500 3.500-2-.5-4 2-3h2.200v-3H21l-2-3 .5-4L16 1.500 14.500 5z" strokeLinejoin="round" />
          <circle cx="12" cy="12" r="4" />
        </Icon>
        <Chevron />
      </button>
    </div>
    <div className="mt-[21px] flex h-[34px] items-center border border-[#8a8a8a] bg-white pl-2 pr-1">
      <input aria-label="搜索字段" placeholder="搜索" className="min-w-0 flex-1 bg-transparent outline-none placeholder:text-[#767676]" />
      <SearchIcon />
    </div>
    <div className="mt-[27px] flex h-[198px] border border-[#8a8a8a] bg-white">
      <div className="flex flex-1 flex-col justify-between pb-[7px] pl-[5px]">
        {fields.map((f) => (
          <label key={f.name} className={`flex h-[27px] items-center gap-2 leading-[26px] ${f.on ? "font-bold" : ""}`}>
            <span className="relative flex">
              <input
                type="checkbox"
                defaultChecked={f.on}
                className="size-5 appearance-none border-2 border-[#858585] bg-white checked:border-[#107c41] checked:bg-[#107c41]"
              />
              {f.on && (
                <Icon w={12} h={10} className="absolute left-1 top-[5px] text-white">
                  <path d="M1 5l3 3 7-7" strokeWidth={1.800} />
                </Icon>
              )}
            </span>
            {f.name}
          </label>
        ))}
      </div>
      <div className="flex w-[26px] flex-col items-center bg-[#f4f4f4] py-[7px]">
        <Triangle d={up} />
        <div className="mt-2 h-[79px] w-3 bg-[#707070]" />
        <span className="mt-auto"><Triangle d={down} /></span>
      </div>
    </div>
    <p className="ml-[5px] mt-[26px] leading-[30px]">在以下区域间拖动字段:</p>
    <div className="-mr-px ml-1 mt-[22px] grid grid-cols-[176px_1fr]">
      <div className="border-b border-r border-[#a6a6a6] pb-2 pr-[9px]">
        <AreaTitle className="-mt-2 pl-1.5" icon={<Icon w={18} h={18}><path d="M0 0h18v1l-7 8v9H7V9L0 1z" fill="currentColor" stroke="none" /></Icon>}>筛选</AreaTitle>
        <div className="h-[71px] bg-white" />
      </div>
      <div className="border-b border-[#a6a6a6] pb-2 pl-[3px]">
        <AreaTitle className="-mt-2 pl-2" icon={<Icon w={14} h={16}><path d="M0 0h4v16H0z" fill="currentColor" stroke="none" /><path d="M6.500 0v16M9.500 0v16M12.500 0v16" strokeWidth={1} /></Icon>}>图例(系列)</AreaTitle>
        <div className="h-[71px] bg-white pt-[3px]">
          <AreaSelect label="图例(系列)" value="战区" />
        </div>
      </div>
      <div className="border-r border-[#a6a6a6] pr-[9px]">
        <AreaTitle className="pl-1.5" icon={<Icon w={16} h={14}><path d="M0 0h16v4H0z" fill="currentColor" stroke="none" /><path d="M0 6.500h16M0 9.500h16M0 12.500h16" strokeWidth={1} /></Icon>}>轴(类别)</AreaTitle>
        <div className="h-[72px] bg-white pt-0.5">
          <AreaSelect label="轴(类别)" value="日期（天）" />
        </div>
      </div>
      <div className="pl-[3px]">
        <AreaTitle className="pl-2" icon={<Icon w={14} h={16}><path d="M13 4V1H1l7 7-7 7h12v-3" /></Icon>}>值</AreaTitle>
        <div className="relative h-[72px] bg-white pt-0.5">
          <AreaSelect label="值" value="求和项:成交额" />
          <div className="pointer-events-none absolute -left-3 -right-2 -top-1.5 h-[54px] rounded border-6 border-[#ff2010]" />
        </div>
      </div>
    </div>
    <div className="relative -mr-px mt-[30px] flex h-[38px] items-center justify-between pl-2">
      <label className="flex items-center gap-2.5">
        <input type="checkbox" className="size-5 appearance-none rounded-[3px] border-2 border-[#858585] bg-white" />
        延迟布局更新
      </label>
      <button disabled className="h-[38px] w-[52px] border border-[#dcdcdc] text-[#b8b8b8]">更新</button>
      <span className="absolute right-0 top-[22px] whitespace-nowrap text-[15px]/[20px] text-[#858585] [text-shadow:1px_1px_0_#fff]">
        CSDN @毛媛媛
      </span>
    </div>
  </aside>
);

export default function App() {
  return (
    <div className="min-h-screen overflow-hidden bg-[#e3e4e9] font-['Noto_Sans','Noto_Sans_CJK_SC',sans-serif] text-[#262626]">
      <TitleBar />
      <RibbonTabs />
      <Ribbon />
      <FormulaBar />
      <main className="relative flex">
        <div className="flex min-w-0 flex-1 flex-col">
          <div className="flex h-[720px]">
            <div className="relative min-w-0 flex-1 overflow-hidden bg-white">
              <Grid />
              <Slicer />
              <Chart />
              <ChartButtons />
            </div>
            <div className="ml-[3px] mr-0.5 flex w-[26px] flex-col items-center rounded-full bg-[#f4f4f4] pb-1 pt-[7px]">
              <Triangle d={up} />
              <div className="mt-2 h-[228px] w-3 rounded-full bg-[#707070]" />
              <span className="mt-auto"><Triangle d={down} /></span>
            </div>
          </div>
          <SheetTabs />
        </div>
        <FieldPane />
        {/* red arrow from the values area to the legend */}
        <svg width="560" height="170" viewBox="0 0 560 170" className="pointer-events-none absolute right-[210px] top-[468px]">
          <path d="M6 9L23 4.500 20 9 554 165v2L19 17l-1 5z" fill="#ff2010" />
        </svg>
      </main>
    </div>
  );
}
